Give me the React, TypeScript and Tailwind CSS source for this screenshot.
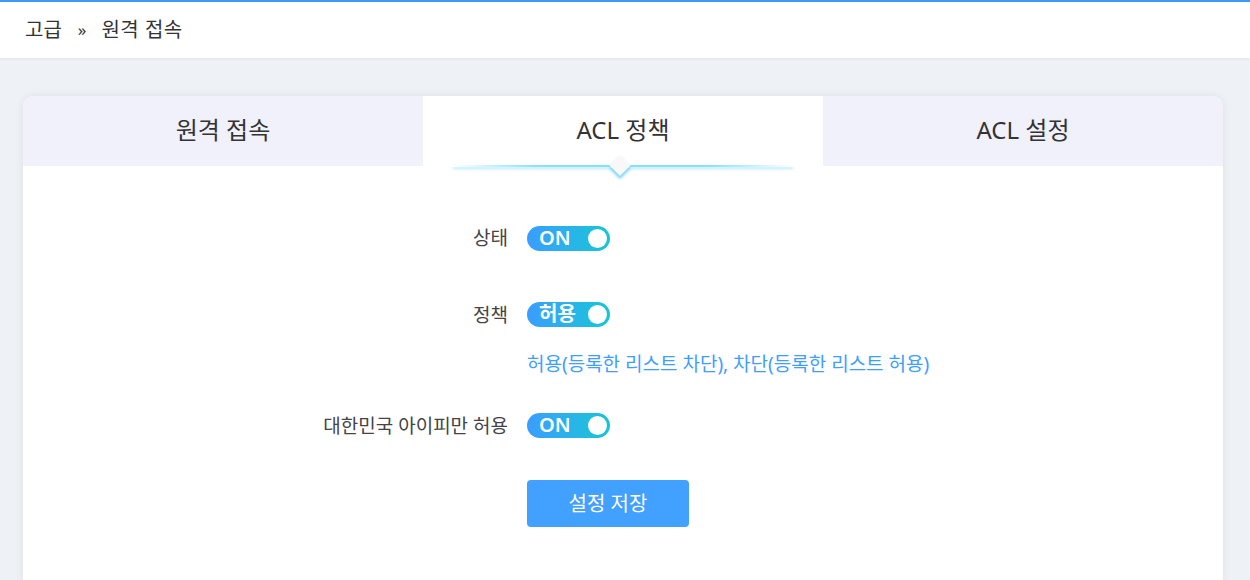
import { useState, type FC } from "react";

const FONT = "font-['Noto_Sans','Noto_Sans_CJK_KR',sans-serif]";

const Toggle: FC<{ label: string; on: boolean; onChange: (v: boolean) => void }> = ({ label, on, onChange }) => (
  <button
    onClick={() => onChange(!on)}
    className="relative flex h-[25px] w-[83px] items-center rounded-full bg-gradient-to-r from-[#3a9dff] to-[#13c6d3] pl-[12px] text-[20px] font-semibold leading-none text-white"
  >
    <span className="-mt-px">{label}</span>
    <span className="absolute right-[3px] top-[3px] h-[19px] w-[19px] rounded-full bg-white" />
  </button>
);

const tabs = ["원격 접속", "ACL 정책", "ACL 설정"];

export default function App() {
  const [active, setActive] = useState(1);
  const [status, setStatus] = useState(true);
  const [policy, setPolicy] = useState(true);
  const [korea, setKorea] = useState(true);

  return (
    <div className={`min-h-[580px] bg-[#eef1f5] ${FONT}`}>
      {/* header */}
      <div className="border-t-2 border-[#3d9bf5] bg-white shadow-[0_1px_3px_rgba(0,0,0,0.06)]">
        <div className="flex h-[56px] items-center px-[25px] text-[20px] text-[#333]">
          <span>고급</span>
          <span className="ml-[16px] mr-[15px] text-[17px]">»</span>
          <span className="tracking-[0.5px]">원격 접속</span>
        </div>
      </div>

      <div className="pl-[23px] pt-[38px]">
        <div className="h-[486px] w-[1200px] rounded-t-[10px] bg-white shadow-[0_0_8px_rgba(0,0,0,0.08)]">
          {/* tabs */}
          <div className="grid grid-cols-3">
            {tabs.map((t, i) => (
              <button
                key={t}
                onClick={() => setActive(i)}
                className={`relative flex h-[70px] items-center justify-center text-[24px] text-[#333] ${
                  active === i ? "z-10 bg-white" : "bg-[#f0f1fb]"
                } ${i === 0 ? "rounded-tl-[10px]" : ""} ${i === 2 ? "rounded-tr-[10px]" : ""}`}
              >
                <span className="-mt-[2px]">{t}</span>
                {active === i && (
                  <>
                    <span className="absolute bottom-[-1px] left-[30px] right-[30px] h-[2px] bg-[linear-gradient(90deg,rgba(140,225,250,0),#88e0fb_25%,#88e0fb_75%,rgba(140,225,250,0))] shadow-[0_2px_3px_rgba(120,215,250,0.6)]" />
                    <span className="absolute bottom-[-7px] left-[calc(50%-3px)] h-[15px] w-[15px] -translate-x-1/2 rotate-45 bg-[#f8f8f8] shadow-[2px_2px_3px_rgba(80,200,245,0.8)]" />
                  </>
                )}
              </button>
            ))}
          </div>

          {/* form */}
          <div className="grid grid-cols-[485px_1fr] items-center gap-x-[19px] pt-[58px] text-[19px] text-[#444]">
            <div className="text-right">상태</div>
            <div><Toggle label="ON" on={status} onChange={setStatus} /></div>

            <div className="mt-[48px] text-right">정책</div>
            <div className="mt-[48px]"><Toggle label="허용" on={policy} onChange={setPolicy} /></div>

            <div />
            <div className="mt-[21px] text-[#409eff]">허용(등록한 리스트 차단), 차단(등록한 리스트 허용)</div>

            <div className="mt-[33px] text-right">대한민국 아이피만 허용</div>
            <div className="mt-[33px]"><Toggle label="ON" on={korea} onChange={setKorea} /></div>

            <div />
            <div className="mt-[40px]">
              <button className="h-[47px] w-[162px] rounded-[4px] bg-[#42a0ff] text-[20px] text-white">설정 저장</button>
            </div>
          </div>
        </div>
      </div>
    </div>
  );
}
